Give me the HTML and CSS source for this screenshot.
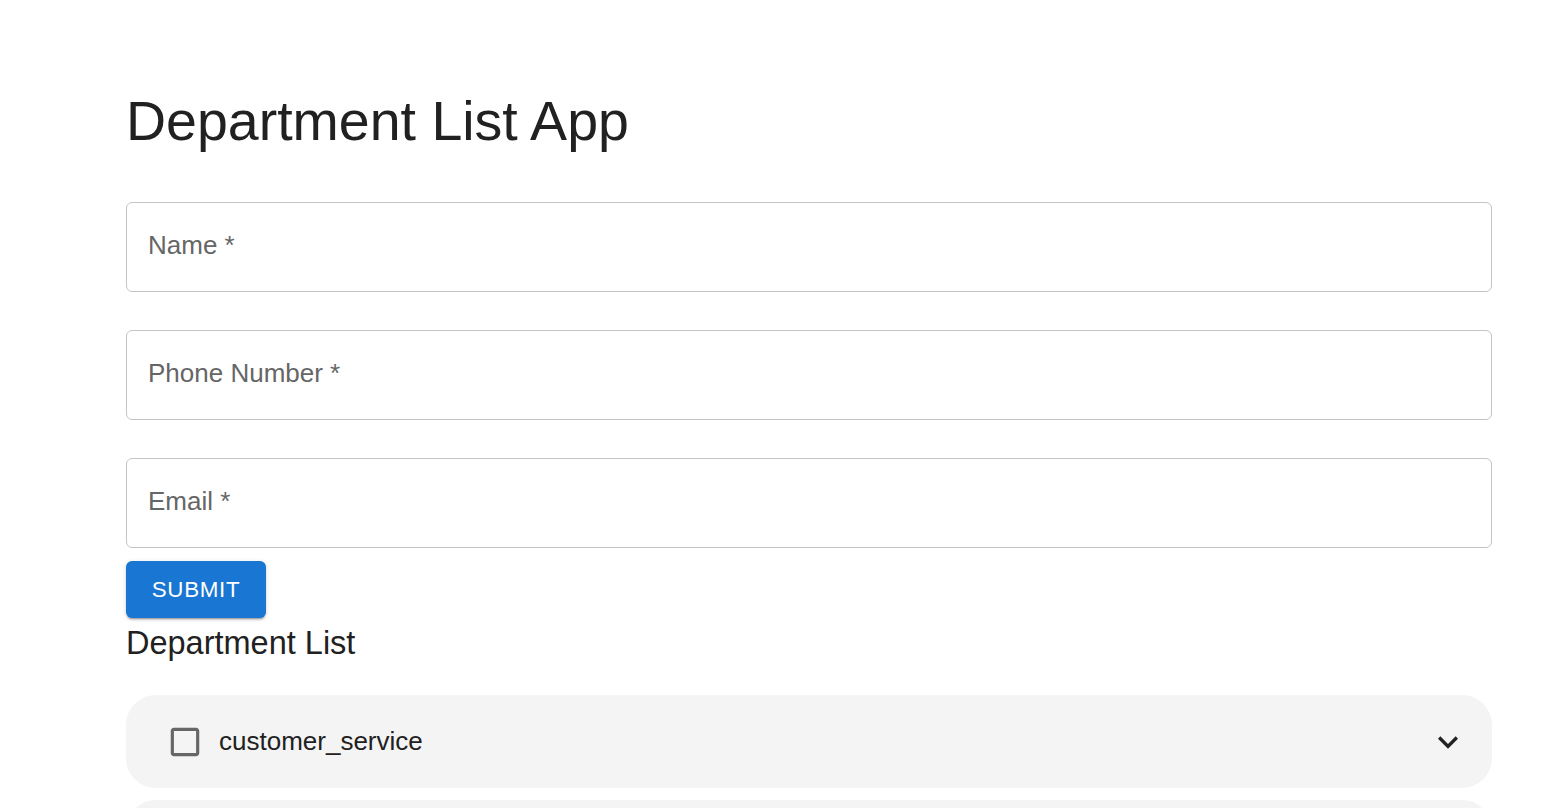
FILE: index.html
```html
<!DOCTYPE html>
<html lang="en">
<head>
<meta charset="utf-8">
<title>Department List App</title>
<link rel="stylesheet" href="styles.css">
</head>
<body>
<main class="page">
  <h1 class="title">Department List App</h1>
  <form class="form">
    <div class="field"><span class="label">Name *</span></div>
    <div class="field"><span class="label">Phone Number *</span></div>
    <div class="field"><span class="label">Email *</span></div>
    <button type="button" class="btn">SUBMIT</button>
  </form>
  <h2 class="subtitle">Department List</h2>
  <div class="list">
    <div class="item">
      <svg class="cb" viewBox="0 0 24 24"><path d="M19 5v14H5V5h14m0-2H5c-1.11 0-2 .9-2 2v14c0 1.1.89 2 2 2h14c1.1 0 2-.9 2-2V5c0-1.1-.9-2-2-2z"/></svg>
      <span class="item-text">customer_service</span>
      <svg class="chev" viewBox="0 0 24 24"><path d="M16.59 8.59 12 13.17 7.41 8.59 6 10l6 6 6-6z"/></svg>
    </div>
    <div class="item"></div>
  </div>
</main>
</body>
</html>
```

FILE: styles.css
```css
html, body {
  margin: 0;
  padding: 0;
  background: #fff;
}
body {
  font-family: "Liberation Sans", Arial, sans-serif;
  color: rgba(0, 0, 0, 0.87);
}
.page {
  padding: 88px 51px 0 126px;
}
.title {
  margin: 0;
  font-size: 55.5px;
  font-weight: 400;
  line-height: 66px;
  color: #212121;
}
.form {
  margin-top: 48px;
  display: flex;
  flex-direction: column;
  align-items: flex-start;
}
.field {
  box-sizing: border-box;
  width: 100%;
  height: 90px;
  border: 1px solid #c4c4c4;
  border-radius: 6px;
  margin-bottom: 38px;
  padding: 0 0 4px 21px;
  display: flex;
  align-items: center;
}
.field:nth-child(3) {
  margin-bottom: 13px;
}
.label {
  font-size: 26px;
  color: #666;
}
.btn {
  width: 140px;
  height: 57px;
  border: none;
  border-radius: 6px;
  background: #1976d2;
  color: #fff;
  font-family: "Liberation Sans", Arial, sans-serif;
  font-size: 22.4px;
  letter-spacing: 0.64px;
  padding: 0;
  box-shadow: 0 3px 1px -2px rgba(0,0,0,0.2), 0 2px 2px 0 rgba(0,0,0,0.14), 0 1px 5px 0 rgba(0,0,0,0.12);
  cursor: pointer;
}
.subtitle {
  margin: 0;
  font-size: 32.5px;
  font-weight: 400;
  line-height: 51px;
  color: #212121;
}
.list {
  margin-top: 26px;
  display: flex;
  flex-direction: column;
  gap: 12px;
}
.item {
  box-sizing: border-box;
  height: 93px;
  background: #f4f4f4;
  border-radius: 30px;
  display: flex;
  align-items: center;
  padding: 0 24px 0 40px;
}
.cb {
  width: 38px;
  height: 38px;
  fill: #666;
  flex: none;
}
.item-text {
  margin-left: 15px;
  font-size: 26px;
  color: #212121;
  flex: 1;
}
.chev {
  width: 40px;
  height: 40px;
  fill: #222;
  flex: none;
}
```
